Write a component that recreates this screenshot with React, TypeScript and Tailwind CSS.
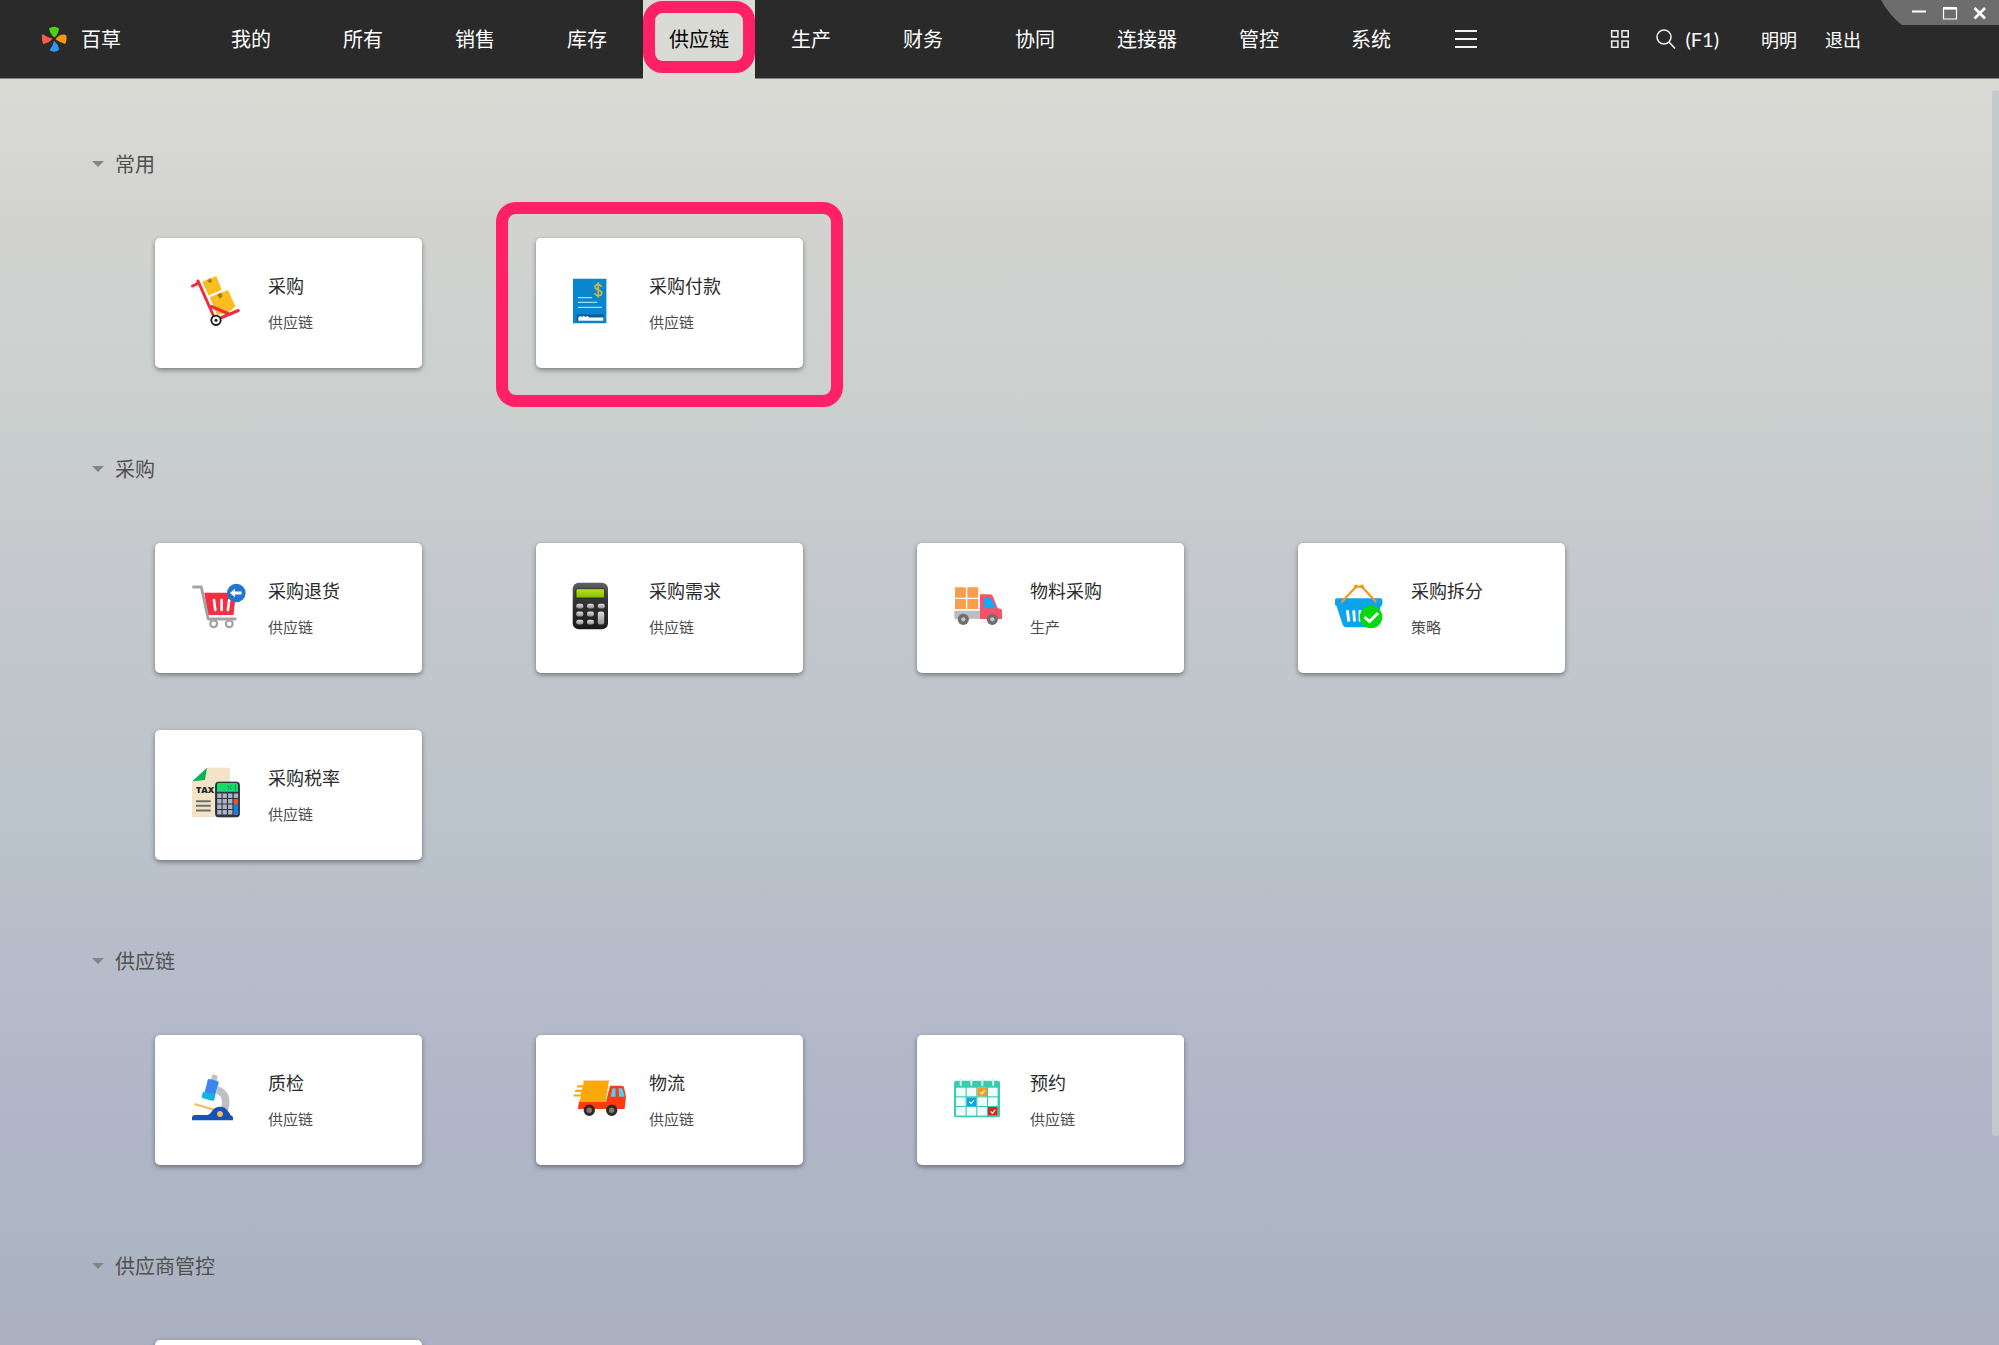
import type { ReactNode } from "react";

const NAV = ["我的", "所有", "销售", "库存", "供应链", "生产", "财务", "协同", "连接器", "管控", "系统"];
const ACTIVE = "供应链";

function Svg({ children }: { children: ReactNode }) {
  return (
    <svg viewBox="0 0 60 60" className="mb-1 size-[60px] shrink-0" fill="none" aria-hidden="true">
      {children}
    </svg>
  );
}

function DollyIcon() {
  return (
    <Svg>
      <path d="M14.3 10.7 28.3 5l5.4 13.7L20.5 24.5z" fill="#fbbd1f" />
      <path d="M21.8 26.3 40 19l7.5 16.5L41 41l-12 3z" fill="#fbbd1f" />
      <path d="m19 8.9 4-1.6 1 3.6-2.6 1.2z" fill="#b07a10" />
      <path d="m29 23.6 4.4-1.8 1.2 4-3.2 1.8z" fill="#b07a10" />
      <path d="M4.5 15 9.6 12.6 10 10l16 36M33.7 46.5 50.3 39.5M23.5 35.5 41 43" stroke="#ee2e3e" strokeWidth="3" strokeLinecap="round" strokeLinejoin="round" />
      <circle cx="28" cy="49.3" r="4.7" fill="#fff" stroke="#161616" strokeWidth="1.8" />
      <circle cx="28" cy="49.3" r="1.5" fill="#161616" />
    </Svg>
  );
}

function BillIcon() {
  return (
    <Svg>
      <path d="M4 7.7h33.4v44.6H4z" fill="#0a86cf" />
      <path d="M32.4 15.8c-.4-1.5-1.6-2.3-3.2-2.3-1.9 0-3.2 1-3.2 2.6 0 3.6 6.7 2 6.7 5.800 0 1.700-1.500 2.700-3.400 2.700-1.800 0-3.200-.9-3.600-2.500M29.300 11.300v15.200" stroke="#d6bb35" strokeWidth="1.600" />
      <path d="M9 26.700h14M9 31.300h19M9 36.300h24" stroke="#9fdcf5" strokeWidth="1.200" />
      <path d="M7.700 43.300h27.100v6.900H7.700z" fill="#05609b" />
      <path d="M9.300 49.800v-3.300l2-1.500 1.500 1 2-1.200 1.500 1.300 2-1 2 1.500h14v3.200z" fill="#fff" />
    </Svg>
  );
}

function CartReturnIcon() {
  return (
    <Svg>
      <path d="M16.300 16.700H48L45.500 39H20z" fill="#f62f43" />
      <path d="M26 24l1.300 10M33.600 24v10M41.200 24l-1.300 10" stroke="#fff" strokeWidth="2.600" strokeLinecap="round" />
      <path d="M5.500 11h7.800l6.900 32h27" stroke="#a3a3a6" strokeWidth="2.800" strokeLinecap="round" strokeLinejoin="round" />
      <circle cx="25.700" cy="47.700" r="3.400" fill="#fff" stroke="#a3a3a6" strokeWidth="2.200" />
      <circle cx="41.300" cy="47.700" r="3.400" fill="#fff" stroke="#a3a3a6" strokeWidth="2.200" />
      <circle cx="48.300" cy="17" r="9.300" fill="#2276cf" />
      <path d="m42 17 5-4.300v2.700h6.500v3.200H47v2.700z" fill="#fff" />
    </Svg>
  );
}

function CalculatorIcon() {
  return (
    <Svg>
      <defs>
        <linearGradient id="calc-body" x1="0" y1="0" x2="0" y2="1">
          <stop offset="0" stopColor="#606060" />
          <stop offset=".4" stopColor="#333" />
          <stop offset="1" stopColor="#191919" />
        </linearGradient>
        <linearGradient id="calc-key" x1="0" y1="0" x2="0" y2="1">
          <stop offset="0" stopColor="#ddd" />
          <stop offset="1" stopColor="#8f8f8f" />
        </linearGradient>
        <linearGradient id="calc-screen" x1="0" y1="0" x2="0" y2="1">
          <stop offset="0" stopColor="#b9e51c" />
          <stop offset="1" stopColor="#86bd00" />
        </linearGradient>
      </defs>
      <rect x="3.700" y="6.700" width="35.300" height="46.600" rx="6" fill="url(#calc-body)" />
      <rect x="7" y="12.700" width="28.600" height="9.300" rx="1.500" fill="url(#calc-screen)" stroke="#222" strokeWidth=".8" />
      {[27.7, 35.6, 43.8].map((y) =>
        [7.3, 18, 28.8].map((x) =>
          x > 28 && y > 30 ? null : (
            <rect key={`${x}-${y}`} x={x} y={y} width="7" height="4.800" rx="2" fill="url(#calc-key)" />
          )
        )
      )}
      <rect x="28.800" y="35.600" width="6.400" height="13" rx="2.200" fill="url(#calc-key)" />
    </Svg>
  );
}

function MaterialTruckIcon() {
  return (
    <Svg>
      <path d="M5 11.300h10.900v10.400H5zM17.300 11.300h10.900v10.400H17.300zM5 23.100h10.900v10H5zM17.300 23.100h10.900v10H17.300z" fill="#fb9d4b" />
      <path d="M4.300 34.700H30v8.200H4.300z" fill="#bdbdbd" />
      <path d="M30 18.300h10.300q1.600 0 2.300 1.500l5 12.200 3.400 1q1 .4 1 1.400v8.500H30z" fill="#f9516a" />
      <path d="M33.700 21.700h6.600l6.200 10.600H33.700z" fill="#12a9f5" />
      <circle cx="13.300" cy="43.300" r="5.600" fill="#6f6f70" />
      <circle cx="13.300" cy="43.300" r="2.100" fill="#c5c5c5" />
      <circle cx="42.300" cy="43.300" r="5.600" fill="#6f6f70" />
      <circle cx="42.300" cy="43.300" r="2.100" fill="#c5c5c5" />
    </Svg>
  );
}

function BasketIcon() {
  return (
    <Svg>
      <path d="M4 24q0-1.700 1.700-1.700h44q1.700 0 1.700 1.700v4q0 1.700-1.500 2L44 49q-.6 2.300-3 2.300H15.500q-3 0-3.700-2.300L5.500 30Q4 29.700 4 28z" fill="#0da4ee" />
      <path d="m16.300 34.300 1.500 11.200M22.700 34.300l.8 11.200M29 34.300v11.200" stroke="#fff" strokeWidth="2.800" />
      <path d="M11 25.700 25 10.700h6l13.700 15" stroke="#ee9a1c" strokeWidth="2.200" strokeLinecap="round" strokeLinejoin="round" />
      <circle cx="25" cy="10.500" r="2" fill="#ee9a1c" />
      <circle cx="31" cy="10.500" r="2" fill="#ee9a1c" />
      <circle cx="40" cy="41" r="11.300" fill="#04d90f" />
      <path d="m33.500 41 5 4.500 8.500-8.500" stroke="#fff" strokeWidth="3" />
    </Svg>
  );
}

function TaxIcon() {
  return (
    <Svg>
      <path d="M4 18.500 18.500 4.700H42V54H4z" fill="#f3e4c8" />
      <path d="M4.300 18.300 19 4.700 17 17z" fill="#0cb259" />
      <text x="8" y="29.500" fontSize="9" fontWeight="800" fontFamily="Open Sans, sans-serif" fill="#242424">
        TAX
      </text>
      <path d="M8 38.300h14.700M8 42.800h14.700M8 47.400h14.700" stroke="#6d6d6d" strokeWidth="2" />
      <rect x="27.700" y="19.200" width="23.600" height="34.600" rx="2.500" fill="#2c3440" stroke="#1b2430" />
      <path d="M29 21.500q0-1.500 1.500-1.500h18q1.500 0 1.500 1.500V28.700H29z" fill="#18dc6a" />
      <path d="m39.500 22.500 4 4m0-4-4 4M47.500 21.800v5.400" stroke="#0c8f44" />
      {[30.5, 36, 41.5, 47].map((y) =>
        [29.2, 34.6, 40.1, 45.8].map((x) => (
          <rect key={`${x}-${y}`} x={x} y={y} width="4.300" height="4.500" fill="#aeb3c4" />
        ))
      )}
      <path d="M45.800 36h4.300v4.500h-4.300z" fill="#f4511e" />
      <path d="M45.800 41.500h4.300v10h-4.300z" fill="#1e7be6" />
    </Svg>
  );
}

function MicroscopeIcon() {
  return (
    <Svg>
      <path d="M29 22q9 2.500 8.700 13 0 5-3.700 9.500" stroke="#bfc0c3" strokeWidth="7.500" />
      <path d="m24.500 6.300 5.300 1.500-1.400 5.500-5.600-1.500z" fill="#bfc0c3" />
      <path d="M19.700 12q.4-1.500 1.900-1l7.900 2q1.600.5 1.200 2l-3.700 12.500-10.700-2z" fill="#3c87ef" />
      <path d="m15 23.800 12.300 3-.9 4.700q-.4 1.500-1.900 1.200l-9.500-2.500q-1.500-.4-1.200-2z" fill="#12b4e4" />
      <path d="m7.300 36.300 21.500 6.200" stroke="#f5bb5b" strokeWidth="2.200" strokeLinecap="round" />
      <path d="M4 50q0-3 3-3h11.500q3.500 0 5.500-4 3-4.300 8-4.300t8 4.300q2 4 5 6v3.300H4z" fill="#1653b4" />
      <circle cx="32" cy="46" r="2.900" fill="#f5bb5b" />
    </Svg>
  );
}

function DeliveryVanIcon() {
  return (
    <Svg>
      <path d="M14.500 12.500H40l-3.500 21.500H10L12 28.500H4.500l.6-2h6.500l.6-2.500H5.800l.7-2.200h6.500l.6-2.400H7.700l.7-2.200h6z" fill="#fba80c" />
      <path d="M10 34h27l4-16.300h12q1.500 0 2 1.500l2 9.500-1.400 12.300H8.800z" fill="#fb3c10" />
      <path d="m43.300 20.500 3.200-.3v8.500h-4.700zM49.500 20.200h3.700l2.600 8.500h-5.600z" fill="#4fd0f2" />
      <circle cx="20.300" cy="42.300" r="4.200" fill="#8e7468" stroke="#2c2b2b" strokeWidth="3" />
      <circle cx="42.700" cy="42.300" r="4.200" fill="#8e7468" stroke="#2c2b2b" strokeWidth="3" />
    </Svg>
  );
}

function CalendarIcon() {
  return (
    <Svg>
      <rect x="4" y="12.700" width="46" height="36.500" rx="2" fill="#38cbad" />
      {[19.7, 29.4, 39].map((y) =>
        [6, 16.7, 27.4, 38].map((x) => (
          <rect key={`${x}-${y}`} x={x} y={y} width="9.600" height="8.600" fill="#f1fbff" />
        ))
      )}
      <path d="M27.400 19.700H37v8.600h-9.600z" fill="#f39a17" />
      <path d="M16.700 29.400h9.600V38h-9.600z" fill="#10a3de" />
      <path d="M38 39h9.600v8.600H38z" fill="#d9251f" />
      <path d="m30 24 1.700 2 3-3.700M19.300 33.700l1.700 2 3-3.700M40.700 43.300l1.700 2 3-3.700" stroke="#fff" strokeWidth="1.100" />
      <path d="M10.700 11v6M21.300 11v6M32.300 11v6M43.200 11v6" stroke="#d5f3ec" strokeWidth="2" strokeLinecap="round" />
    </Svg>
  );
}

type Item = { title: string; group: string; icon: ReactNode; marked?: boolean };
type Section = { name: string; items: Item[] };

const SECTIONS: Section[] = [
  {
    name: "常用",
    items: [
      { title: "采购", group: "供应链", icon: <DollyIcon /> },
      { title: "采购付款", group: "供应链", icon: <BillIcon />, marked: true },
    ],
  },
  {
    name: "采购",
    items: [
      { title: "采购退货", group: "供应链", icon: <CartReturnIcon /> },
      { title: "采购需求", group: "供应链", icon: <CalculatorIcon /> },
      { title: "物料采购", group: "生产", icon: <MaterialTruckIcon /> },
      { title: "采购拆分", group: "策略", icon: <BasketIcon /> },
      { title: "采购税率", group: "供应链", icon: <TaxIcon /> },
    ],
  },
  {
    name: "供应链",
    items: [
      { title: "质检", group: "供应链", icon: <MicroscopeIcon /> },
      { title: "物流", group: "供应链", icon: <DeliveryVanIcon /> },
      { title: "预约", group: "供应链", icon: <CalendarIcon /> },
    ],
  },
  { name: "供应商管控", items: [{ title: "", group: "", icon: null }] },
];

function Card({ item }: { item: Item }) {
  return (
    <div className="relative">
      <button
        type="button"
        className="flex h-[130px] w-full items-center gap-5 rounded-[5px] bg-white pl-[33px] text-left shadow-[0_2px_5px_rgba(0,0,0,0.4)]"
      >
        {item.icon}
        <span className="flex flex-col gap-3">
          <span className="text-[18px] leading-[26px] text-[#2b2b2b]">{item.title}</span>
          <span className="text-[15px] leading-6 text-[#4c4c4c]">{item.group}</span>
        </span>
      </button>
      {item.marked && (
        <div className="pointer-events-none absolute -inset-x-10 -top-9 -bottom-[39px] rounded-[20px] border-12 border-[#ff2068]" />
      )}
    </div>
  );
}

function Header() {
  return (
    <header className="relative flex h-[79px] shrink-0 items-stretch border-b border-[#858585] bg-[#2a2a2a] text-white">
      <a href="#" className="flex w-[195px] items-center gap-[14px] pl-[41px] text-[20px]">
        <svg viewBox="0 0 26 26" className="size-[26px]" aria-hidden="true">
          <path d="M8 2.500Q13-1 18 2.500 17.500 8 13.500 11.500 9.500 9 8 2.500z" fill="#4ad30e" />
          <path d="M25 9q1.500 4.500-.8 9-4.500-1.500-9.700-4.500Q19 7 25 9z" fill="#fb960d" />
          <path d="M8.500 24q4.500 3.500 9.500 0-.5-6-5-9-1 5-4.500 9z" fill="#2d9bf5" />
          <path d="M1.500 8q-1.500 5 .8 10Q8 17 11.500 12.500 6 11.500 1.500 8z" fill="#fa5d45" />
        </svg>
        百草
      </a>
      <nav className="flex">
        {NAV.map((n) =>
          n === ACTIVE ? (
            <button key={n} type="button" className="relative -mb-px w-28 bg-[#dadbd5] pb-px text-[20px] text-black">
              {n}
              <span className="pointer-events-none absolute inset-x-0 top-px h-[72px] rounded-[20px] border-12 border-[#ff2068]" />
            </button>
          ) : (
            <button key={n} type="button" className="w-28 text-[20px]">
              {n}
            </button>
          )
        )}
        <button type="button" aria-label="更多" className="flex w-[78px] items-center justify-center">
          <svg viewBox="0 0 24 20" className="h-5 w-6" stroke="#f2f2f2" strokeWidth="2" aria-hidden="true">
            <path d="M1 2h22M1 10h22M1 18h22" />
          </svg>
        </button>
      </nav>
      <div className="ml-auto flex items-center pr-[138px] text-[18px]">
        <button type="button" aria-label="应用" className="mr-[26px]">
          <svg viewBox="0 0 20 20" className="size-5" fill="none" stroke="#e8e8e8" strokeWidth="1.600" aria-hidden="true">
            <path d="M1.700 1.700h6.200v6.200H1.700zM12 1.700h6.200v6.200H12zM1.700 12h6.200v6.200H1.700zM12 12h6.200v6.200H12z" />
          </svg>
        </button>
        <button type="button" className="mr-[42px] flex items-center gap-[9px]">
          <svg viewBox="0 0 20 20" className="size-5" fill="none" stroke="#f2f2f2" strokeWidth="1.500" aria-hidden="true">
            <circle cx="8" cy="8" r="7" />
            <path d="m13 13 6 6.500" />
          </svg>
          <span className="font-[Lato] text-[20px]">(F1)</span>
        </button>
        <button type="button" className="mr-7">明明</button>
        <button type="button">退出</button>
      </div>
      <div className="absolute top-0 right-0">
        <svg viewBox="0 0 118 25" className="block h-[25px] w-[118px]" fill="none" aria-hidden="true">
          <path d="M0 0h118v25H21Q8 15 0 0z" fill="#6d6d6d" />
          <path d="M31 11.500h14" stroke="#fff" strokeWidth="2" />
          <path d="M62.500 8v11h13V8" stroke="#fff" strokeWidth="1.200" />
          <path d="M62 8.300h14" stroke="#fff" strokeWidth="2.600" />
          <path d="m93.500 8 10.500 10.500M104 8 93.500 18.500" stroke="#fff" strokeWidth="2.600" />
        </svg>
        <div className="absolute inset-0 flex justify-end gap-2 pr-1">
          <button type="button" aria-label="最小化" className="w-7" />
          <button type="button" aria-label="最大化" className="w-6" />
          <button type="button" aria-label="关闭" className="w-6" />
        </div>
      </div>
    </header>
  );
}

export default function App() {
  return (
    <div className="flex h-screen flex-col overflow-hidden bg-[linear-gradient(180deg,#dadbd5_6%,#d2d3d1_17%,#cbd0cf_30%,#c5c8cc_42%,#bcc5cb_58%,#b4bac9_75%,#b0b6c7_84%,#abb5c3_92%,#abb0c0_100%)] font-['Noto_Sans_CJK_SC',sans-serif]">
      <Header />
      <main className="relative min-h-0 flex-1 overflow-hidden pt-[71px] pl-[92px]">
        {SECTIONS.map((s) => (
          <section key={s.name} className="mb-[87px]">
            <h2>
              <button type="button" className="flex h-7 items-center gap-[11px] text-[20px] leading-7 text-[#505050]">
                <svg viewBox="0 0 12 6" className="h-[6px] w-3" fill="#858585" aria-hidden="true">
                  <path d="M0 0h12L6 6z" />
                </svg>
                {s.name}
              </button>
            </h2>
            <div className="mt-[60px] ml-[63px] grid grid-cols-[repeat(auto-fill,267px)] gap-x-[114px] gap-y-[57px] pr-[400px]">
              {s.items.map((i) => (
                <Card key={i.title} item={i} />
              ))}
            </div>
          </section>
        ))}
        <div className="absolute top-[11px] right-0 h-[1046px] w-[7px] rounded-full bg-[#c2c9cd]" />
      </main>
    </div>
  );
}
